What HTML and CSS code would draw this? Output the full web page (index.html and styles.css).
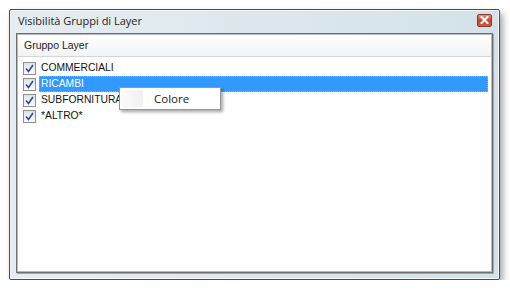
FILE: index.html
```html
<!DOCTYPE html>
<html lang="it">
<head>
  <meta charset="UTF-8" />
  <title>Visibilità Gruppi di Layer</title>
  <link rel="stylesheet" href="styles.css">
</head>
<body>

  <div class="window">
    <div class="titlebar">
      <span class="title">Visibilità Gruppi di Layer</span>
      <span class="close-btn">
        <svg width="9" height="8" viewBox="0 0 9 8">
          <path d="M1.5 1 L7.5 7 M7.5 1 L1.5 7" stroke="#fff" stroke-width="2" stroke-linecap="square"/>
        </svg>
      </span>
    </div>

    <div class="panel">
      <div class="list-header">Gruppo Layer</div>
      <ul class="layer-list">
        <li class="row"><span class="check"><svg width="9" height="9" viewBox="0 0 9 9"><path d="M1 4.5 L3.5 7.5 L8 1" fill="none" stroke="#2a4bb0" stroke-width="1.6"/></svg></span><span class="label">COMMERCIALI</span></li>
        <li class="row selected"><span class="check"><svg width="9" height="9" viewBox="0 0 9 9"><path d="M1 4.5 L3.5 7.5 L8 1" fill="none" stroke="#2a4bb0" stroke-width="1.6"/></svg></span><span class="label">RICAMBI</span></li>
        <li class="row"><span class="check"><svg width="9" height="9" viewBox="0 0 9 9"><path d="M1 4.5 L3.5 7.5 L8 1" fill="none" stroke="#2a4bb0" stroke-width="1.6"/></svg></span><span class="label">SUBFORNITURA</span></li>
        <li class="row"><span class="check"><svg width="9" height="9" viewBox="0 0 9 9"><path d="M1 4.5 L3.5 7.5 L8 1" fill="none" stroke="#2a4bb0" stroke-width="1.6"/></svg></span><span class="label">*ALTRO*</span></li>
      </ul>

      <div class="context-menu">
        <div class="menu-icon"></div>
        <div class="menu-text">Colore</div>
      </div>
    </div>
  </div>

</body>
</html>
```

FILE: styles.css
```css
body {
  margin: 0;
  background: #fff;
  font-family: "Liberation Sans", Arial, sans-serif;
}
.window {
  margin: 9px 0 0 9px;
  width: 477px;
  height: 263px;
  border: 1px solid #4d4d4d;
  border-radius: 2px;
  background: linear-gradient(to right, #e6edf1, #d3e2ea);
  box-shadow: 3px 4px 6px rgba(0, 0, 0, 0.35), inset 0 0 0 1px #f4f8fa;
  display: flex;
  flex-direction: column;
  padding: 0 6px 6px 6px;
}
.titlebar {
  height: 23px;
  display: flex;
  align-items: center;
  justify-content: space-between;
}
.title {
  font-family: "Open Sans", "Noto Sans", sans-serif;
  font-size: 11px;
  color: #1e1e1e;
  margin-left: 2px;
  margin-top: -2px;
}
.close-btn {
  width: 13px;
  height: 11px;
  margin-right: 1px;
  margin-top: -3px;
  border: 1px solid #8a3a2a;
  border-radius: 2px;
  background: linear-gradient(#e8917c, #c9432a 50%, #d65a3e);
  display: flex;
  align-items: center;
  justify-content: center;
}
.panel {
  flex: 1;
  position: relative;
  background: #fff;
  border: 1px solid #6f6f6f;
  box-shadow: inset 0 0 0 1px #b9b9b9, 1px 1px 0 #9aa8b0;
}
.list-header {
  height: 21px;
  margin: 1px 1px 0 1px;
  line-height: 21px;
  padding-left: 6px;
  font-size: 10.5px;
  color: #222;
  background: linear-gradient(#ffffff, #f2f3f5);
  border-bottom: 1px solid #d5d5d5;
}
.layer-list {
  list-style: none;
  margin: 3px 0 0 0;
  padding: 0;
}
.row {
  height: 16px;
  display: flex;
  align-items: center;
  padding-left: 6px;
  font-size: 10.3px;
  color: #111;
}
.check {
  width: 11px;
  height: 11px;
  border: 1px solid #8f8f8f;
  background: linear-gradient(#e2e2e2, #fafafa);
  display: flex;
  align-items: center;
  justify-content: center;
  margin-right: 3px;
}
.label {
  flex: 1;
  height: 16px;
  line-height: 16px;
  padding-left: 2px;
  margin-right: 4px;
  box-sizing: border-box;
}
.selected .label {
  background: #3399ff;
  color: #fff;
  outline: 1px dotted #c9a36b;
  outline-offset: -1px;
}
.context-menu {
  position: absolute;
  left: 102px;
  top: 53px;
  width: 100px;
  height: 21px;
  border: 1px solid #979797;
  background: #fff;
  box-shadow: 2px 2px 3px rgba(0, 0, 0, 0.35);
  display: flex;
}
.menu-icon {
  width: 21px;
  margin: 2px 0 2px 2px;
  background: linear-gradient(to right, #fafafa, #f1f1f1);
  border-right: 1px solid #fcfcfc;
}
.menu-text {
  padding-left: 10px;
  line-height: 21px;
  font-family: "Open Sans", "Noto Sans", sans-serif;
  font-size: 11.5px;
  color: #1a1a1a;
}
```
